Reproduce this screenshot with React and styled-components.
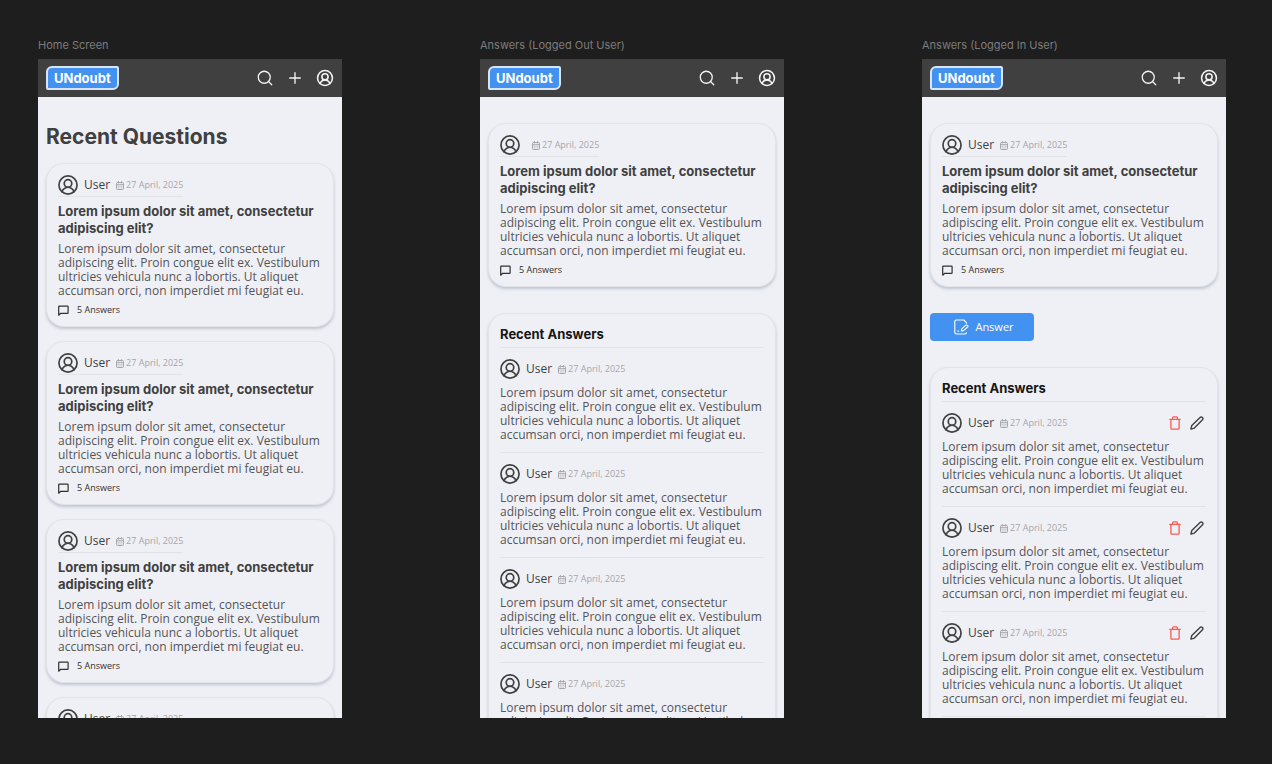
import React from "react";
import styled, { createGlobalStyle } from "styled-components";
import { Search, Plus } from "lucide-react";

const GlobalStyle = createGlobalStyle`
  * { box-sizing: border-box; }
  body { margin: 0; background: #1e1e1e; }
  h1, h2, h3, p, ul { margin: 0; padding: 0; }
  button { font: inherit; border: 0; padding: 0; background: none; cursor: pointer; }
  svg { display: block; flex: none; }
`;

const display = `"Inter", sans-serif`;
const text = `"Open Sans", sans-serif`;

const Canvas = styled.main`
  display: grid;
  grid-template-columns: repeat(3, minmax(0, 1fr));
  gap: 138px;
  height: 100vh;
  padding: 38px 46px 46px 38px;
  background: #1e1e1e;
  font-family: ${text};
`;

const Artboard = styled.section`
  display: flex;
  flex-direction: column;
  min-height: 0;
`;

const BoardLabel = styled.h2`
  margin-bottom: 7px;
  color: #7c7c7c;
  font: 400 11px/14px ${display};
  white-space: nowrap;
`;

const Screen = styled.div`
  flex: 1;
  min-height: 0;
  overflow: hidden;
  background: #eff0f5;
`;

const TopBar = styled.header`
  display: flex;
  align-items: center;
  justify-content: space-between;
  height: 38px;
  padding: 0 8px;
  background: #404040;
`;

const Logo = styled.a`
  padding: 0 6px;
  border: 2px solid #d9e6f8;
  border-radius: 6px 2px 6px 2px;
  background: #4392f1;
  color: #fff;
  font: 700 13px/20px ${display};
  text-decoration: none;
`;

const Actions = styled.nav`
  display: flex;
  gap: 12px;
`;

const IconButton = styled.button`
  display: flex;
  color: ${(p) => p.$color || "#f4f4f6"};
`;

const Content = styled.div`
  display: flex;
  flex-direction: column;
  align-items: flex-start;
  gap: 26px;
  padding: 26px 8px;
`;

const PageTitle = styled.h1`
  margin-bottom: -14px;
  color: #404040;
  font: 700 21px/28px ${display};
`;

const CardList = styled.div`
  display: flex;
  flex-direction: column;
  gap: 14px;
  width: 100%;
`;

const Card = styled.article`
  width: 100%;
  padding: 11px 11px 10px;
  border: 1px solid #e2e3e7;
  border-radius: 18px;
  background: #eff0f5;
  box-shadow: 0 2px 3px rgba(120, 135, 165, 0.4);
`;

const Meta = styled.div`
  display: inline-flex;
  align-items: center;
  gap: 6px;
  height: ${(p) => (p.$ruled ? 22 : 20)}px;
  padding-bottom: ${(p) => (p.$ruled ? 1 : 0)}px;
  border-bottom: ${(p) => (p.$ruled ? "1px solid #e2e3e7" : "0")};
  vertical-align: top;
  color: #404040;
`;

const UserName = styled.span`
  font-size: 12px;
  line-height: 20px;
`;

const DateStamp = styled.time`
  display: flex;
  align-items: center;
  gap: 2px;
  color: #a6a6aa;
  font-size: 9px;
  line-height: 12px;
  white-space: nowrap;
`;

const QuestionTitle = styled.h3`
  margin-top: 6px;
  color: #404040;
  font: 700 13px/17px ${display};
`;

const Body = styled.p`
  margin-top: ${(p) => p.$gap}px;
  color: #555558;
  font-size: 12px;
  line-height: 14px;
`;

const AnswerCount = styled.div`
  display: flex;
  align-items: center;
  gap: 8px;
  margin-top: 6px;
  color: #303030;
  font-size: 9px;
  line-height: 12px;
`;

const AnswerButton = styled.button`
  display: flex;
  align-items: center;
  justify-content: center;
  gap: 6px;
  width: 104px;
  height: 28px;
  padding-left: 4px;
  border-radius: 4px;
  background: #4392f1;
  color: #fff;

  span {
    font-size: 11px;
    line-height: 16px;
  }
`;

const PanelTitle = styled.h3`
  padding-bottom: 4px;
  border-bottom: 1px solid #e2e3e7;
  color: #161616;
  font: 700 13px/18px ${display};
`;

const AnswerItem = styled.div`
  padding: 11px 0 10px;
  border-bottom: 1px solid #e2e3e7;
`;

const AnswerHead = styled.div`
  display: flex;
  align-items: center;
  justify-content: space-between;
  height: 20px;
`;

const Tools = styled.div`
  display: flex;
  align-items: center;
  gap: 9px;
  padding-right: 2px;
`;

const LOREM =
  "Lorem ipsum dolor sit amet, consectetur adipiscing elit. Proin congue elit ex. Vestibulum ultricies vehicula nunc a lobortis. Ut aliquet accumsan orci, non imperdiet mi feugiat eu.";

function UserIcon({ size, inset = 0, stroke = 18 }) {
  const start = 22 - inset;
  const span = 212 + inset * 2;
  return (
    <svg width={size} height={size} viewBox={`${start} ${start} ${span} ${span}`} fill="none" stroke="currentColor" strokeWidth={stroke} strokeLinecap="round">
      <circle cx="128" cy="128" r="96" />
      <circle cx="128" cy="112" r="40" />
      <path d="M64 199a70 70 0 0 1 34-38q30-18 60 0a70 70 0 0 1 34 38" />
    </svg>
  );
}

function CalendarIcon() {
  return (
    <svg width="8" height="9" viewBox="0 0 8 9" fill="none" stroke="currentColor" strokeLinecap="round">
      <rect x=".5" y="1.5" width="7" height="7" rx="1" />
      <path d="M.5 3.7h7M2.4.5v1.6M5.6.5v1.6" />
      <path d="M2 5.4h4M2 7h4" strokeWidth=".6" strokeDasharray=".6 1.1" />
    </svg>
  );
}

function CommentIcon() {
  return (
    <svg width="11" height="11" viewBox="0 0 11 11" fill="none" stroke="currentColor" strokeWidth="1.2" strokeLinejoin="round">
      <path d="M.7 10.2V1.7q0-.6.6-.6h8.2q.6 0 .6.6v6q0 .6-.6.6H2.7z" />
    </svg>
  );
}

function TrashIcon() {
  return (
    <svg width="12" height="14" viewBox="0 0 12 14" fill="none" stroke="currentColor" strokeWidth="1.3" strokeLinecap="round" strokeLinejoin="round">
      <path d="M.8 3.4h10.4M1.9 3.4v8.8q0 .9.9.9h6.4q.9 0 .9-.9V3.4M3.6 3.2V1.9q0-1 1-1h2.8q1 0 1 1v1.3" />
    </svg>
  );
}

function PencilIcon() {
  return (
    <svg width="14" height="14" viewBox="0 0 14 14" fill="none" stroke="currentColor" strokeWidth="1.4" strokeLinecap="round" strokeLinejoin="round">
      <path d="M.9 13.1l.9-3.6 8.3-8.1q1.2-1 2.3.1t.1 2.3l-8.1 8.3z" />
    </svg>
  );
}

function NoteIcon() {
  return (
    <svg width="15" height="16" viewBox="0 0 15 16" fill="none" stroke="currentColor" strokeWidth="1.1" strokeLinecap="round" strokeLinejoin="round">
      <path d="M12.4 4.2v-.6L9.8 1H2.4Q.8 1 .8 2.6v10.8q0 1.6 1.6 1.6H11q1.3 0 1.3-1.4" />
      <path d="M7.3 12l.5-2.2 4-3.6q.8-.6 1.7.2t.1 1.6l-4 3.6z" />
      <path d="M3.8 12.1h.8" />
    </svg>
  );
}

function UserMeta({ name, ruled }) {
  return (
    <Meta $ruled={ruled}>
      <UserIcon size={20} />
      <UserName>{name}</UserName>
      <DateStamp dateTime="2025-04-27">
        <CalendarIcon />
        27 April, 2025
      </DateStamp>
    </Meta>
  );
}

function QuestionCard({ name }) {
  return (
    <Card>
      <UserMeta name={name} ruled />
      <QuestionTitle>Lorem ipsum dolor sit amet, consectetur adipiscing elit?</QuestionTitle>
      <Body $gap={5}>{LOREM}</Body>
      <AnswerCount>
        <CommentIcon />
        5 Answers
      </AnswerCount>
    </Card>
  );
}

function AnswersPanel({ editable }) {
  return (
    <Card>
      <PanelTitle>Recent Answers</PanelTitle>
      {[0, 1, 2, 3].map((n) => (
        <AnswerItem key={n}>
          <AnswerHead>
            <UserMeta name="User" />
            {editable && (
              <Tools>
                <IconButton $color="#fb5a50" aria-label="Delete answer"><TrashIcon /></IconButton>
                <IconButton $color="#404040" aria-label="Edit answer"><PencilIcon /></IconButton>
              </Tools>
            )}
          </AnswerHead>
          <Body $gap={7}>{LOREM}</Body>
        </AnswerItem>
      ))}
    </Card>
  );
}

function Board({ label, children }) {
  return (
    <Artboard>
      <BoardLabel>{label}</BoardLabel>
      <Screen>
        <TopBar>
          <Logo href="#">UNdoubt</Logo>
          <Actions>
            <IconButton aria-label="Search"><Search size={18} strokeWidth={1.7} /></IconButton>
            <IconButton aria-label="Ask a question"><Plus size={18} strokeWidth={1.8} /></IconButton>
            <IconButton aria-label="Account"><UserIcon size={18} inset={10} stroke={20} /></IconButton>
          </Actions>
        </TopBar>
        <Content>{children}</Content>
      </Screen>
    </Artboard>
  );
}

export default function App() {
  return (
    <>
      <GlobalStyle />
      <Canvas>
        <Board label="Home Screen">
          <PageTitle>Recent Questions</PageTitle>
          <CardList>
            {[0, 1, 2, 3].map((n) => <QuestionCard key={n} name="User" />)}
          </CardList>
        </Board>
        <Board label="Answers (Logged Out User)">
          <QuestionCard />
          <AnswersPanel />
        </Board>
        <Board label="Answers (Logged In User)">
          <QuestionCard name="User" />
          <AnswerButton>
            <NoteIcon />
            <span>Answer</span>
          </AnswerButton>
          <AnswersPanel editable />
        </Board>
      </Canvas>
    </>
  );
}
